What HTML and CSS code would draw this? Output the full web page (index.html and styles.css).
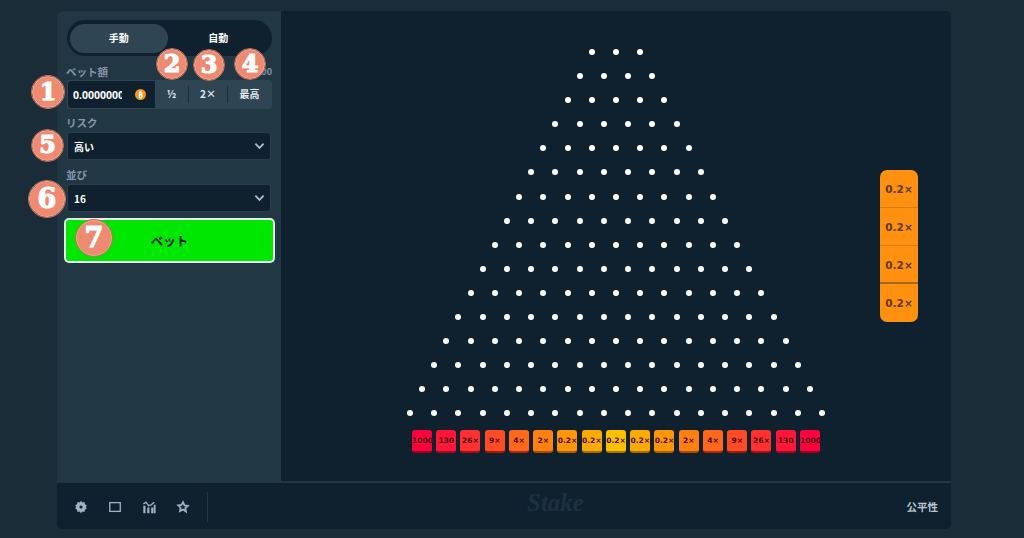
FILE: index.html
```html
<!DOCTYPE html>
<html lang="ja">

<head>
    <meta charset="UTF-8">
    <meta name="viewport" content="width=device-width, initial-scale=1.0">
    <title>Plinko</title>
    <link rel="stylesheet" href="styles.css">
</head>

<body>
    <div class="game">
        <div class="game-main">
            <aside class="sidebar">
                <div class="tabs">
                    <button type="button" class="tab tab-active">手動</button>
                    <button type="button" class="tab">自動</button>
                </div>

                <div class="label-row">
                    <label>ベット額</label>
                    <span class="amount">$0.00</span>
                </div>
                <div class="bet-group">
                    <div class="bet-input">
                        <input type="text" value="0.00000000">
                        <span class="coin">₿</span>
                    </div>
                    <button type="button" class="bet-btn bet-half">½</button>
                    <button type="button" class="bet-btn bet-double">2×</button>
                    <button type="button" class="bet-btn bet-max">最高</button>
                </div>

                <div class="label-row">
                    <label>リスク</label>
                </div>
                <div class="select-box">
                    <span>高い</span>
                    <svg class="chevron" viewBox="0 0 12 8"><path d="M1.5 1.5 6 6l4.5-4.5" /></svg>
                </div>

                <div class="label-row">
                    <label>並び</label>
                </div>
                <div class="select-box">
                    <span>16</span>
                    <svg class="chevron" viewBox="0 0 12 8"><path d="M1.5 1.5 6 6l4.5-4.5" /></svg>
                </div>

                <button type="button" class="bet-submit">ベット</button>
            </aside>

            <main class="board">
                <div class="board-center">
                    <div class="pegs" id="pegs"></div>
                    <div class="slots">
                        <div class="slot s0">1000</div>
                        <div class="slot s1">130</div>
                        <div class="slot s2">26×</div>
                        <div class="slot s3">9×</div>
                        <div class="slot s4">4×</div>
                        <div class="slot s5">2×</div>
                        <div class="slot s6">0.2×</div>
                        <div class="slot s7">0.2×</div>
                        <div class="slot s8">0.2×</div>
                        <div class="slot s7">0.2×</div>
                        <div class="slot s6">0.2×</div>
                        <div class="slot s5">2×</div>
                        <div class="slot s4">4×</div>
                        <div class="slot s3">9×</div>
                        <div class="slot s2">26×</div>
                        <div class="slot s1">130</div>
                        <div class="slot s0">1000</div>
                    </div>
                </div>
                <div class="history">
                    <div class="history-item">0.2×</div>
                    <div class="history-item">0.2×</div>
                    <div class="history-item">0.2×</div>
                    <div class="history-item history-last">0.2×</div>
                </div>
            </main>
        </div>

        <footer class="footer">
            <div class="footer-icons">
                <svg viewBox="0 0 16 16"><path class="fill" fill-rule="evenodd" d="M8 .8l1.500 2 2.500-.4.5 2.500 2.200 1.300L13.500 8l1.200 1.800-2.200 1.300-.5 2.500-2.500-.4-1.500 2-1.500-2-2.500.4-.5-2.500-2.200-1.300L2.500 8 1.300 6.200l2.200-1.300.5-2.500 2.500.4zM8 6.200a1.800 1.800 0 1 0 0 3.600 1.800 1.800 0 0 0 0-3.600z" /></svg>
                <svg viewBox="0 0 16 16"><rect class="line" x="2" y="3" width="12" height="10" /></svg>
                <svg viewBox="0 0 16 16"><path class="fill" d="M1.500 6.500h2.500V15H1.500zM6 8.500h2.500V15H6zM10.500 8.500H13V15h-2.500zM13.500 5.500H15.500V15h-2z" /><path class="line" d="M1.500 4.500l3-2 3 4 3-1 3.500-3" /></svg>
                <svg viewBox="0 0 16 16"><path class="line line-thick" d="M8 2.500l1.700 3.600 3.800.5-2.800 2.700.7 3.900L8 10.800l-3.400 1.900.7-3.900-2.800-2.700 3.800-.5z" /></svg>
            </div>
            <div class="footer-logo">Stake</div>
            <a class="fairness">公平性</a>
        </footer>
    </div>

    <!-- annotation badges -->
    <span class="badge badge-1">1</span>
    <span class="badge badge-2">2</span>
    <span class="badge badge-3">3</span>
    <span class="badge badge-4">4</span>
    <span class="badge badge-5">5</span>
    <span class="badge badge-6">6</span>
    <span class="badge badge-7">7</span>

    <script src="board.js"></script>
</body>

</html>
```

FILE: styles.css
```css
* {
    margin: 0;
    padding: 0;
    box-sizing: border-box;
}

body {
    position: relative;
    height: 538px;
    overflow: hidden;
    padding: 11px 73px 9px 57px;
    background-color: #1a2c38;
    font-family: 'Noto Sans CJK JP', 'Noto Sans', sans-serif;
    font-weight: 700;
    color: #fff;
}

button {
    font-family: inherit;
    font-weight: 700;
    border: none;
    color: #fff;
}

.game {
    display: flex;
    flex-direction: column;
    height: 518px;
    border-radius: 6px;
    overflow: hidden;
    background-color: #0f212e;
}

.game-main {
    display: flex;
    height: 470px;
}

/* sidebar */
.sidebar {
    width: 224px;
    padding: 9px 9px 0 10px;
    background-color: #213743;
}

.tabs {
    display: flex;
    width: 205px;
    height: 36px;
    padding: 4px 3px;
    border-radius: 18px;
    background-color: #0f212e;
}

.tab {
    width: 98px;
    height: 29px;
    padding-bottom: 2px;
    border-radius: 15px;
    background: none;
    font-size: 10px;
}

.tab + .tab {
    width: 102px;
}

.tab-active {
    background-color: #2f4553;
}

.label-row {
    display: flex;
    justify-content: space-between;
    align-items: center;
    height: 16px;
    margin: 7px 0 1px;
    font-size: 10.500px;
    font-weight: 700;
    color: #8596a8;
}

.label-row label {
    margin-left: -1px;
}

.amount {
    font-size: 9px;
}

.bet-group {
    display: flex;
    align-items: center;
    width: 205px;
    height: 29px;
    padding: 1px;
    border-radius: 3px;
    background-color: #2f4553;
}

.bet-group + .label-row {
    margin: 5px 0 2px;
}

.bet-input {
    display: flex;
    align-items: center;
    width: 87px;
    height: 27px;
    padding: 0 9px 0 5px;
    border-radius: 3px 0 0 3px;
    background-color: #0f212e;
}

.bet-input input {
    width: 49px;
    border: none;
    outline: none;
    background: none;
    color: #fff;
    font-family: 'Noto Sans', sans-serif;
    font-size: 10.500px;
    font-weight: 700;
}

.coin {
    width: 11px;
    height: 11px;
    margin-left: auto;
    border-radius: 50%;
    background-color: #f7931a;
    font-size: 8px;
    line-height: 11px;
    text-align: center;
}

.bet-btn {
    height: 17px;
    padding-bottom: 2px;
    background: none;
    font-size: 10px;
    line-height: 15px;
    color: #e4eaf0;
}

.bet-half {
    width: 34px;
    border-right: 1px solid #1a2c38;
}

.bet-double {
    width: 39px;
    border-right: 1px solid #1a2c38;
}

.bet-max {
    width: 43px;
}

.select-box {
    display: flex;
    justify-content: space-between;
    align-items: center;
    width: 204px;
    height: 28px;
    padding: 0 5px 0 6px;
    border: 1px solid #2a3f4d;
    border-radius: 3px;
    background-color: #0f212e;
    font-size: 10px;
}

.select-box + .label-row {
    margin: 6px 0 2px;
}

.chevron {
    width: 11px;
    height: 8px;
    fill: none;
    stroke: #b1bad3;
    stroke-width: 2;
}

.bet-submit {
    display: block;
    width: 211px;
    height: 45px;
    margin: 6px 0 0 -3px;
    border: 2px solid #e8eef0;
    border-radius: 5px;
    background-color: #00e701;
    color: #05121a;
    font-size: 12.500px;
}

/* board */
.board {
    flex: 1;
    display: grid;
    grid-template-columns: 1fr auto 1fr;
    align-items: start;
    background-color: #0f212e;
}

.board-center {
    grid-column: 2;
    padding-top: 38px;
}

.pegs {
    display: flex;
    flex-direction: column;
    align-items: center;
    gap: 18.100px;
}

.peg-row {
    display: flex;
    gap: 18.240px;
}

.peg {
    width: 6px;
    height: 6px;
    border-radius: 50%;
    background-color: #fff;
}

.slots {
    display: flex;
    justify-content: center;
    gap: 4.250px;
    margin-top: 13.500px;
}

.slot {
    width: 20px;
    height: 23px;
    border-radius: 3px;
    border-bottom: 2px solid;
    color: #4a0a10;
    font-family: 'DejaVu Sans', sans-serif;
    font-size: 7.500px;
    line-height: 21px;
    text-align: center;
    white-space: nowrap;
}

.s0 { background-color: #ff003f; border-color: #a6001f; }
.s1 { background-color: #ff1537; border-color: #a60d1a; }
.s2 { background-color: #ff302f; border-color: #a6100f; }
.s3 { background-color: #ff4b26; border-color: #a6180c; }
.s4 { background-color: #ff671c; border-color: #a62c08; }
.s5 { background-color: #ff7f10; border-color: #a64a06; }
.s6 { background-color: #ff9508; border-color: #a66205; }
.s7 { background-color: #ffaa00; border-color: #a67000; }
.s8 { background-color: #ffc000; border-color: #a67c00; }

.history {
    grid-column: 3;
    justify-self: end;
    align-self: center;
    width: 38px;
    margin-right: 33px;
    border-radius: 7px;
    overflow: hidden;
    background-color: #ff9010;
}

.history-item {
    height: 38px;
    border-bottom: 1px solid #d97c12;
    color: #5c3a10;
    font-family: 'DejaVu Sans', sans-serif;
    font-size: 10.500px;
    line-height: 38px;
    text-align: center;
}

.history-item:nth-child(3) {
    border-bottom: 2px solid #a8661a;
}

.history-last {
    border-bottom: none;
}

/* footer */
.footer {
    position: relative;
    display: flex;
    justify-content: space-between;
    align-items: center;
    height: 48px;
    padding: 1px 13px 0 0;
    border-top: 2px solid #213743;
    background-color: #0f212e;
}

.footer-icons {
    display: flex;
    align-items: center;
    gap: 20px;
    height: 30px;
    width: 151px;
    padding-left: 17px;
    border-right: 1px solid #213743;
}

.footer-icons svg {
    width: 14px;
    height: 14px;
}

.fill {
    fill: #a4b0c4;
}

.line {
    fill: none;
    stroke: #a4b0c4;
    stroke-width: 1.500;
}

.line-thick {
    stroke-width: 2;
}

.footer-logo {
    position: absolute;
    left: 470px;
    top: 6px;
    font-family: 'Liberation Serif', serif;
    font-style: italic;
    font-size: 25px;
    font-weight: 700;
    color: #1c3240;
}

.fairness {
    font-size: 10.500px;
    color: #b8c5d4;
}

/* annotation badges sit on top of the screenshot */
.badge {
    position: absolute;
    width: 32px;
    height: 32px;
    border-radius: 50%;
    border: 1px solid #f6ad99;
    outline: 1px solid #c4705c;
    background-color: #ee8a70;
    color: #fff;
    font-family: 'DejaVu Serif', serif;
    font-size: 24px;
    font-weight: 700;
    -webkit-text-stroke: 1.200px #fff;
    line-height: 29px;
    text-align: center;
}

.badge-1 { left: 32px; top: 76px; }
.badge-2 { left: 157px; top: 49px; width: 30px; height: 30px; line-height: 27px; }
.badge-3 { left: 194px; top: 50px; width: 30px; height: 30px; line-height: 27px; }
.badge-4 { left: 235px; top: 49px; width: 30px; height: 30px; line-height: 27px; }
.badge-5 { left: 32px; top: 130px; width: 31px; height: 31px; line-height: 28px; }
.badge-6 { left: 29px; top: 181px; width: 36px; height: 36px; font-size: 27px; line-height: 33px; }
.badge-7 { left: 76px; top: 220px; width: 36px; height: 36px; font-size: 27px; line-height: 33px; }
```

FILE: board.js
```js
// 16 rows of pegs, 3 on top and 18 at the bottom
var pegs = document.getElementById('pegs');

for (var r = 0; r < 16; r++) {
    var row = document.createElement('div');
    row.className = 'peg-row';
    for (var i = 0; i < r + 3; i++) {
        var peg = document.createElement('span');
        peg.className = 'peg';
        row.appendChild(peg);
    }
    pegs.appendChild(row);
}
```
